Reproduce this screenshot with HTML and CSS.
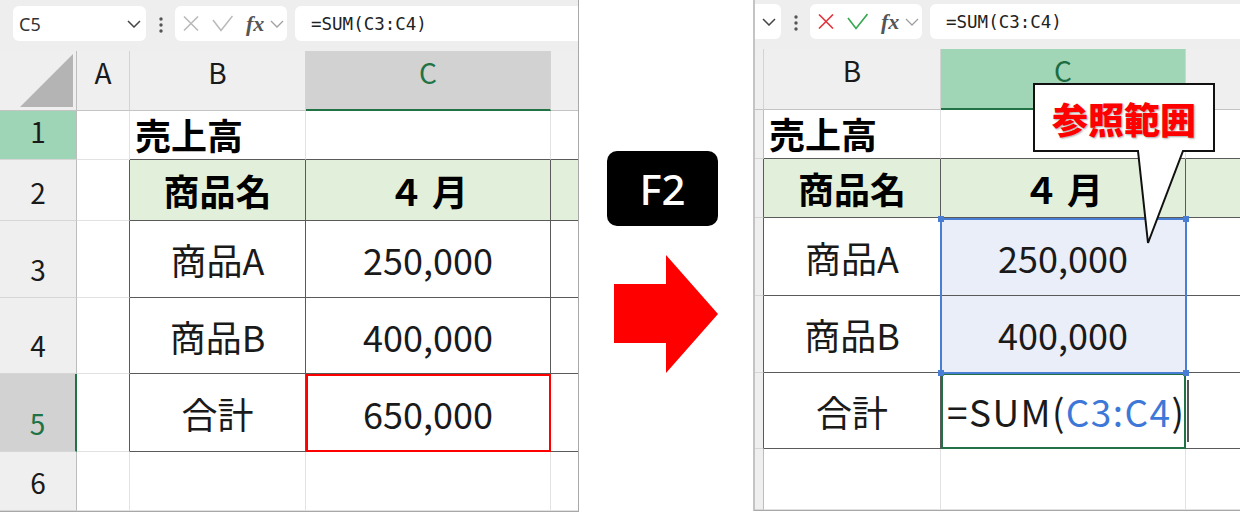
FILE: index.html
```html
<!DOCTYPE html>
<html lang="ja">
<head>
  <meta charset="UTF-8" />
  <title>F2 参照範囲</title>
  <link rel="stylesheet" href="styles.css">
</head>
<body>
<div class="page">

  <!-- 左: 編集前 -->
  <div class="sheet sheet-left">
    <div class="fbar">
      <div class="namebox">
        <span>C5</span>
        <svg class="chev-dark" width="14" height="8" viewBox="0 0 14 8"><path d="M1 1L7 7L13 1" fill="none" stroke="#444" stroke-width="1.5"/></svg>
      </div>
      <svg class="dots" width="10" height="35" viewBox="0 0 10 35"><circle cx="5" cy="13" r="1.7" fill="#555"/><circle cx="5" cy="19" r="1.7" fill="#555"/><circle cx="5" cy="25" r="1.7" fill="#555"/></svg>
      <div class="fxbox">
        <svg class="ico-x" width="16" height="15" viewBox="0 0 16 15"><path d="M1 0.5L15 14.5M15 0.5L1 14.5" stroke="#b9b9b9" stroke-width="1.5"/></svg>
        <svg class="ico-ok" width="21" height="17" viewBox="0 0 21 17"><path d="M1 5L9 15.5L20.5 1" fill="none" stroke="#b9b9b9" stroke-width="1.5"/></svg>
        <span class="fx">fx</span>
        <svg class="chev" width="14" height="8" viewBox="0 0 14 8"><path d="M1 1L7 7L13 1" fill="none" stroke="#a0a0a0" stroke-width="1.3"/></svg>
      </div>
      <div class="formula">=SUM(C3:C4)</div>
    </div>

    <div class="grid grid-left">
      <div class="corner"><svg width="76" height="59" viewBox="0 0 76 59"><polygon points="20,56 73,3 73,56" fill="#b4b4b4"/></svg></div>
      <div class="colh">A</div>
      <div class="colh">B</div>
      <div class="colh colh-sel">C</div>
      <div class="colh d"></div>

      <div class="rowh rowh-hl">1</div>
      <div class="c"></div>
      <div class="c over title">売上高</div>
      <div class="c over"></div>
      <div class="c over d"></div>

      <div class="rowh">2</div>
      <div class="c edge"></div>
      <div class="c th">商品名</div>
      <div class="c th">４ 月</div>
      <div class="c th d"></div>

      <div class="rowh">3</div>
      <div class="c edge"></div>
      <div class="c td">商品A</div>
      <div class="c td num">250,000</div>
      <div class="c td d"></div>

      <div class="rowh">4</div>
      <div class="c edge"></div>
      <div class="c td">商品B</div>
      <div class="c td num">400,000</div>
      <div class="c td d"></div>

      <div class="rowh rowh-sel">5</div>
      <div class="c edge"></div>
      <div class="c td">合計</div>
      <div class="c td num sel-red">650,000</div>
      <div class="c td d"></div>

      <div class="rowh">6</div>
      <div class="c"></div>
      <div class="c"></div>
      <div class="c"></div>
      <div class="c d"></div>
    </div>
  </div>

  <!-- 中央: F2 キー -->
  <div class="middle">
    <div class="key">F2</div>
    <svg class="arrow" width="104" height="118" viewBox="0 0 104 118"><polygon points="0,29 52,29 52,0 104,59 52,118 52,88 0,88" fill="#ff0000"/></svg>
  </div>

  <!-- 右: 編集中 -->
  <div class="sheet sheet-right">
    <div class="fbar fbar-right">
      <div class="namebox namebox-cut">
        <span></span>
        <svg width="14" height="8" viewBox="0 0 14 8"><path d="M1 1L7 7L13 1" fill="none" stroke="#444" stroke-width="1.5"/></svg>
      </div>
      <svg class="dots" width="10" height="35" viewBox="0 0 10 35"><circle cx="5" cy="13" r="1.7" fill="#555"/><circle cx="5" cy="19" r="1.7" fill="#555"/><circle cx="5" cy="25" r="1.7" fill="#555"/></svg>
      <div class="fxbox">
        <svg class="ico-x" width="16" height="15" viewBox="0 0 16 15"><path d="M1 0.5L15 14.5M15 0.5L1 14.5" stroke="#e5333b" stroke-width="1.6"/></svg>
        <svg class="ico-ok" width="21" height="17" viewBox="0 0 21 17"><path d="M1 5L9 15.5L20.5 1" fill="none" stroke="#35a84f" stroke-width="1.6"/></svg>
        <span class="fx">fx</span>
        <svg class="chev" width="14" height="8" viewBox="0 0 14 8"><path d="M1 1L7 7L13 1" fill="none" stroke="#a0a0a0" stroke-width="1.3"/></svg>
      </div>
      <div class="formula">=SUM(C3:C4)</div>
    </div>

    <div class="grid grid-right">
      <div class="colh strip"></div>
      <div class="colh">B</div>
      <div class="colh colh-on">C</div>
      <div class="colh d"></div>

      <div class="rowh strip"></div>
      <div class="c over title">売上高</div>
      <div class="c over"></div>
      <div class="c over d"></div>

      <div class="rowh strip edge"></div>
      <div class="c th">商品名</div>
      <div class="c th">４ 月</div>
      <div class="c th d"></div>

      <div class="rowh strip edge"></div>
      <div class="c td">商品A</div>
      <div class="c td num ref">250,000</div>
      <div class="c td d"></div>

      <div class="rowh strip edge"></div>
      <div class="c td">商品B</div>
      <div class="c td num ref">400,000</div>
      <div class="c td d"></div>

      <div class="rowh strip edge"></div>
      <div class="c td">合計</div>
      <div class="c td editing sel-green"><span class="edit-text">=SUM(<span class="blue">C3:C4</span>)</span><span class="caret"></span></div>
      <div class="c td d"></div>

      <div class="rowh strip"></div>
      <div class="c"></div>
      <div class="c"></div>
      <div class="c d"></div>
    </div>

    <div class="range">
      <span class="h tl"></span><span class="h tr"></span><span class="h bl"></span><span class="h br"></span>
    </div>

    <div class="callout">
      <svg width="184" height="163" viewBox="0 0 184 163"><polygon points="1,1 181,1 181,68 150,68 115,160 105,68 1,68" fill="#fff" stroke="#111" stroke-width="2" stroke-linejoin="miter"/></svg>
      <span class="callout-text">参照範囲</span>
    </div>
  </div>

</div>
</body>
</html>
```

FILE: styles.css
```css
* {
  box-sizing: border-box;
}
body {
  margin: 0;
  background: #fff;
  font-family: "Noto Sans CJK JP", "Noto Sans", sans-serif;
  color: #1a1a1a;
}
.page {
  display: flex;
  width: 1240px;
  height: 512px;
  overflow: hidden;
}

/* シート */
.sheet {
  position: relative;
  overflow: hidden;
  background: #fff;
  border-bottom: 1px solid #a8a8a8;
}
.sheet-left {
  width: 579px;
  height: 512px;
  border-right: 1px solid #a8a8a8;
}
.sheet-right {
  width: 487px;
  height: 511px;
  border-left: 2px solid #c4c4c4;
}

/* 数式バー */
.fbar {
  height: 51px;
  background: #eeeeee;
  display: flex;
  align-items: flex-start;
  padding: 6px 0 0 13px;
}
.fbar-right {
  height: 49px;
  padding: 4px 0 0 0;
}
.namebox {
  width: 133px;
  height: 35px;
  flex-shrink: 0;
  background: #fff;
  border-radius: 6px;
  display: flex;
  align-items: center;
  justify-content: space-between;
  padding: 0 5px 0 6px;
  font-family: "Noto Sans", sans-serif;
  font-size: 18px;
  color: #333;
}
.namebox-cut {
  margin-left: -107px;
}
.dots {
  flex-shrink: 0;
  margin: 0 9px 0 10px;
}
.fxbox {
  width: 112px;
  height: 35px;
  flex-shrink: 0;
  background: #fff;
  border-radius: 6px;
  display: flex;
  align-items: center;
  padding-left: 8px;
}
.ico-ok {
  margin-left: 13px;
  margin-top: -1px;
}
.fx {
  margin-left: 13px;
  font-family: "Liberation Serif", serif;
  font-style: italic;
  font-weight: 700;
  font-size: 22px;
  color: #555;
  line-height: 1;
}
.chev {
  margin-left: 6px;
}
.formula {
  flex: 1;
  margin-left: 8px;
  height: 35px;
  background: #fff;
  border-radius: 6px 0 0 6px;
  padding-left: 16px;
  display: flex;
  align-items: center;
  font-family: "DejaVu Sans Mono", monospace;
  font-size: 17.5px;
  color: #222;
}

/* グリッド */
.grid {
  display: grid;
}
.grid-left {
  grid-template-columns: 77px 53px 176px 245px 27px;
  grid-template-rows: 60px 49px 61px 77px 76px 78px 59px;
}
.grid-right {
  grid-template-columns: 9px 177px 245px 54px;
  grid-template-rows: 61px 49px 59px 78px 77px 76px 61px;
}
.corner,
.colh,
.rowh {
  background: #efefef;
  border-right: 1px solid #d3d3d3;
  border-bottom: 1px solid #c4c4c4;
  display: flex;
  justify-content: center;
  font-size: 28px;
  line-height: 1;
  color: #1a1a1a;
}
.colh {
  align-items: flex-start;
  padding-top: 7px;
}
.corner {
  border-right-color: #bdbdbd;
  align-items: flex-start;
  justify-content: flex-start;
}
.rowh {
  align-items: flex-end;
  padding-bottom: 14px;
  border-right-color: #bdbdbd;
  border-bottom-color: #d6d6d6;
}
.colh-sel {
  background: #d2d2d2;
  color: #217346;
  border-bottom: 2px solid #217346;
}
.colh-on {
  background: #a0d6b6;
  color: #1d6b41;
  border-bottom: 2px solid #217346;
}
.rowh-hl {
  background: #9fd5b7;
}
.rowh-sel {
  background: #d2d2d2;
  color: #217346;
  border-right: 2px solid #217346;
}
.strip {
  font-size: 0;
}

.c {
  border-right: 1px solid #e2e2e2;
  border-bottom: 1px solid #e2e2e2;
  display: flex;
  align-items: center;
  justify-content: center;
  font-size: 36px;
  color: #1a1a1a;
  white-space: nowrap;
}
.edge {
  border-right-color: #5a5a5a;
}
.over {
  border-bottom-color: #5a5a5a;
}
.th,
.td {
  border-right-color: #5a5a5a;
  border-bottom-color: #5a5a5a;
}
.th {
  background: #e2efda;
  font-weight: 700;
  color: #000;
}
.title {
  justify-content: flex-start;
  padding: 0 0 3px 5px;
  font-weight: 700;
  color: #000;
}
.d {
  border-right: 0;
}
.ref {
  background: #e9eef8;
}
.sel-red {
  outline: 2px solid #ff0000;
  outline-offset: -2px;
}
.sel-green {
  outline: 2px solid #217346;
  outline-offset: -2px;
}
.editing {
  justify-content: flex-start;
  padding-left: 6px;
  overflow: visible;
}
.edit-text {
  flex-shrink: 0;
  font-size: 37px;
  letter-spacing: 1.4px;
}
.blue {
  color: #3d78d8;
}
.caret {
  flex-shrink: 0;
  width: 2px;
  height: 62px;
  margin-left: 2px;
  background: #555;
}

/* 参照範囲の枠 */
.range {
  position: absolute;
  left: 185px;
  top: 218px;
  width: 247px;
  height: 156px;
  border: 2px solid #4a7ed4;
}
.h {
  position: absolute;
  width: 6px;
  height: 6px;
  background: #4a7ed4;
}
.tl { left: -4px; top: -4px; }
.tr { right: -4px; top: -4px; }
.bl { left: -4px; bottom: -4px; }
.br { right: -4px; bottom: -4px; }

/* 吹き出し */
.callout {
  position: absolute;
  left: 278px;
  top: 83px;
  width: 184px;
  height: 163px;
}
.callout svg {
  display: block;
}
.callout-text {
  position: absolute;
  left: 1px;
  top: 1px;
  width: 180px;
  height: 67px;
  display: flex;
  align-items: center;
  justify-content: center;
  font-size: 36px;
  font-weight: 900;
  color: #ff0000;
  text-shadow: 1px 1px 2px rgba(0, 0, 0, 0.35);
}

/* 中央 */
.middle {
  width: 174px;
  flex-shrink: 0;
  padding: 151px 0 0 28px;
}
.key {
  width: 111px;
  height: 75px;
  background: #000;
  border-radius: 10px;
  color: #fff;
  font-family: "Noto Sans", sans-serif;
  font-size: 42px;
  font-weight: 500;
  display: flex;
  align-items: center;
  justify-content: center;
}
.arrow {
  display: block;
  margin: 29px 0 0 7px;
}
```
